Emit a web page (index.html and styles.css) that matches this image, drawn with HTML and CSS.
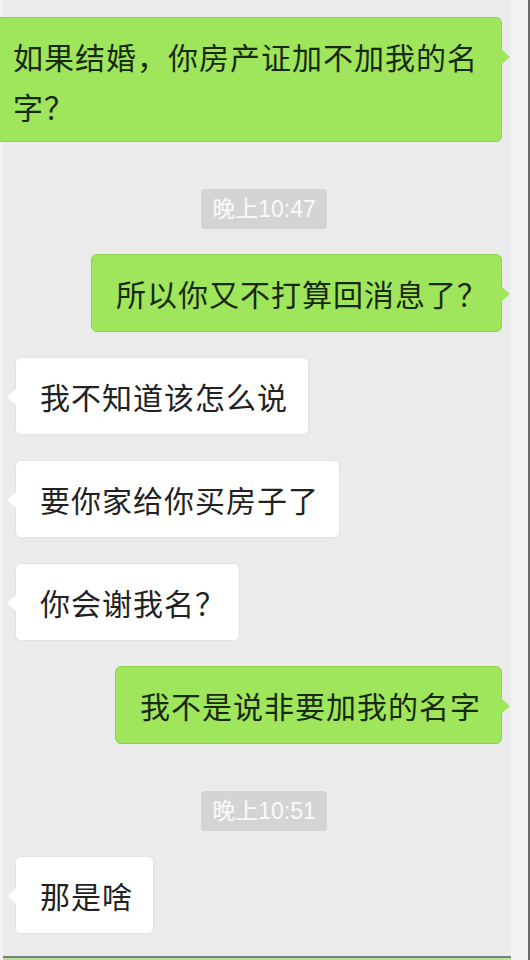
FILE: index.html
```html
<!DOCTYPE html>
<html lang="zh-CN">
<head>
    <meta charset="UTF-8">
    <meta name="viewport" content="width=device-width, initial-scale=1.0">
    <title>聊天记录</title>
    <link rel="stylesheet" href="styles.css">
</head>
<body>

    <div class="screen">
        <div class="chat">
            <!-- me -->
            <div class="row row-right">
                <div class="bubble bubble-green bubble-full">如果结婚，你房产证加不加我的名字？</div>
            </div>

            <div class="time-row">
                <span class="time">晚上10:47</span>
            </div>

            <div class="row row-right">
                <div class="bubble bubble-green">所以你又不打算回消息了<span class="q">？</span></div>
            </div>

            <!-- other side -->
            <div class="row row-left">
                <div class="bubble bubble-white">我不知道该怎么说</div>
            </div>
            <div class="row row-left">
                <div class="bubble bubble-white">要你家给你买房子了</div>
            </div>
            <div class="row row-left">
                <div class="bubble bubble-white">你会谢我名<span class="q">？</span></div>
            </div>

            <div class="row row-right">
                <div class="bubble bubble-green">我不是说非要加我的名字</div>
            </div>

            <div class="time-row">
                <span class="time">晚上10:51</span>
            </div>

            <div class="row row-left">
                <div class="bubble bubble-white">那是啥</div>
            </div>

            <div class="peek"></div>
        </div>
        <div class="edge"></div>
    </div>

</body>
</html>
```

FILE: styles.css
```css
body {
    margin: 0;
    padding: 0;
    height: 960px;
    overflow: hidden;
    background-color: #ebebeb;
    font-family: "Noto Sans CJK SC", "Liberation Sans", sans-serif;
}
.screen {
    display: flex;
    height: 960px;
}
.chat {
    flex: 1;
    display: flex;
    flex-direction: column;
    gap: 25px;
    padding-top: 17px;
    background-color: #ebebeb;
    border-left: 3px solid #f3f3f3;
}
.edge {
    width: 17px;
    background-color: #f3f3f3;
    border-right: 2px solid #6a6a6a;
}
.row {
    display: flex;
}
.row-right {
    justify-content: flex-end;
    padding-right: 9px;
}
.row-left {
    justify-content: flex-start;
    padding-left: 12px;
}
.bubble {
    position: relative;
    font-size: 30px;
    letter-spacing: 1px;
    line-height: 50px;
    white-space: nowrap;
    padding: 13px 20px 13px 24px;
    border-radius: 6px;
}
.bubble::before {
    content: "";
    position: absolute;
    top: 31px;
    width: 0;
    height: 0;
    border-top: 8px solid transparent;
    border-bottom: 8px solid transparent;
}
.bubble-green {
    background-color: #9fe65c;
    border: 1px solid #8fd04f;
    color: #18290e;
}
.bubble-green::before {
    right: -9px;
    border-left: 9px solid #9fe65c;
}
.bubble-white {
    background-color: #ffffff;
    border: 1px solid #e2e2e2;
    color: #222222;
}
.bubble-white::before {
    left: -9px;
    border-right: 9px solid #ffffff;
}
.bubble-full {
    flex: 1;
    white-space: normal;
    margin-left: -3px;
    border-left: none;
    border-radius: 0 6px 6px 0;
    padding: 13px 19px 10px 13px;
}
.q {
    margin-right: -7px;
}
.time-row {
    display: flex;
    justify-content: center;
    padding-left: 14px;
    margin-top: 22px;
}
.time {
    display: inline-block;
    background-color: #d4d4d4;
    color: #fafafa;
    font-family: "Liberation Sans", "Noto Sans CJK SC", sans-serif;
    font-size: 23px;
    line-height: 40px;
    height: 40px;
    padding: 0 11px;
    border-radius: 4px;
}
.peek {
    margin-top: -3px;
    height: 6px;
    border-top: 2px solid #7d7d7d;
    background-color: #b9e29a;
}
```
